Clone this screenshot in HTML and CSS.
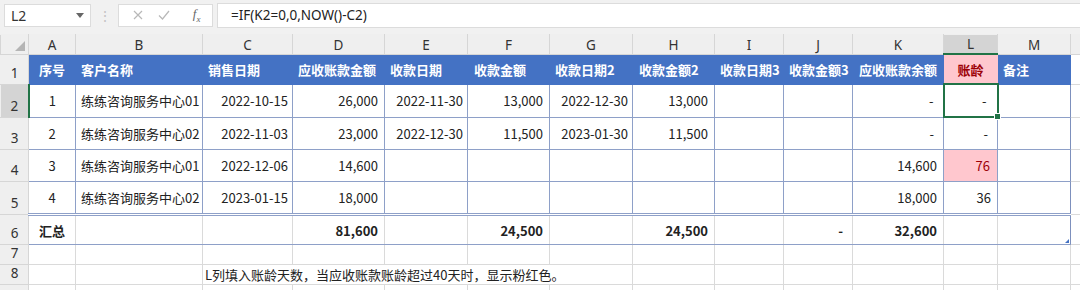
FILE: index.html
```html
<!DOCTYPE html>
<html>
<head>
  <title>账龄表</title>
  <link rel="stylesheet" href="styles.css">
</head>
<body>
  <div class="formula-bar">
    <div class="name-box">
      <span>L2</span>
      <svg class="caret" width="8" height="5" viewBox="0 0 8 5"><path d="M0 0h8L4 5z" fill="#666"/></svg>
    </div>
    <div class="grip">⋮</div>
    <div class="fx-buttons">
      <svg width="10" height="10" viewBox="0 0 10 10"><path d="M1 1l8 8M9 1l-8 8" stroke="#b8b8b8" stroke-width="1.2"/></svg>
      <svg width="12" height="10" viewBox="0 0 12 10"><path d="M1 5.5l3.5 3.5L11 1" stroke="#b8b8b8" stroke-width="1.2" fill="none"/></svg>
      <span class="fx">f<sub>x</sub></span>
    </div>
    <div class="formula-input">=IF(K2=0,0,NOW()-C2)</div>
  </div>

  <table class="sheet">
    <colgroup>
      <col style="width:28px"><col style="width:47px"><col style="width:127px"><col style="width:90px">
      <col style="width:92px"><col style="width:83px"><col style="width:82px"><col style="width:83px">
      <col style="width:82px"><col style="width:69px"><col style="width:69px"><col style="width:91px">
      <col style="width:54px"><col style="width:73px"><col style="width:80px">
    </colgroup>
    <tr class="col-heads">
      <th class="corner"><span class="corner-mark"></span></th>
      <th>A</th><th>B</th><th>C</th><th>D</th><th>E</th><th>F</th><th>G</th>
      <th>H</th><th>I</th><th>J</th><th>K</th><th class="sel-col">L</th><th>M</th><th></th>
    </tr>
    <tr class="r-head">
      <th class="row-num">1</th>
      <td class="c">序号</td><td>客户名称</td><td>销售日期</td><td>应收账款金额</td><td>收款日期</td>
      <td class="p6">收款金额</td><td>收款日期2</td><td class="p6">收款金额2</td><td>收款日期3</td><td>收款金额3</td>
      <td class="p6">应收账款余额</td><td class="c warn">账龄</td><td>备注</td><td class="plain"></td>
    </tr>
    <tr class="r-data">
      <th class="row-num sel-row">2</th>
      <td class="c">1</td><td>练练咨询服务中心01</td><td class="r">2022-10-15</td><td class="n">26,000</td>
      <td class="r">2022-11-30</td><td class="n">13,000</td><td class="r">2022-12-30</td><td class="n">13,000</td>
      <td></td><td></td><td class="n">-&nbsp;</td><td class="n sel-cell">-&nbsp;<span class="handle"></span></td><td class="last"></td><td class="plain"></td>
    </tr>
    <tr class="r-data">
      <th class="row-num">3</th>
      <td class="c">2</td><td>练练咨询服务中心02</td><td class="r">2022-11-03</td><td class="n">23,000</td>
      <td class="r">2022-12-30</td><td class="n">11,500</td><td class="r">2023-01-30</td><td class="n">11,500</td>
      <td></td><td></td><td class="n">-&nbsp;</td><td class="n">-&nbsp;</td><td class="last"></td><td class="plain"></td>
    </tr>
    <tr class="r-data">
      <th class="row-num">4</th>
      <td class="c">3</td><td>练练咨询服务中心01</td><td class="r">2022-12-06</td><td class="n">14,600</td>
      <td></td><td></td><td></td><td></td>
      <td></td><td></td><td class="n">14,600</td><td class="n warn-fill">76</td><td class="last"></td><td class="plain"></td>
    </tr>
    <tr class="r-data">
      <th class="row-num">5</th>
      <td class="c">4</td><td>练练咨询服务中心02</td><td class="r">2023-01-15</td><td class="n">18,000</td>
      <td></td><td></td><td></td><td></td>
      <td></td><td></td><td class="n">18,000</td><td class="n">36</td><td class="last"></td><td class="plain"></td>
    </tr>
    <tr class="r-total">
      <th class="row-num">6</th>
      <td class="c">汇总</td><td></td><td></td><td class="n">81,600</td>
      <td></td><td class="n">24,500</td><td></td><td class="n">24,500</td>
      <td></td><td class="n">-&nbsp;</td><td class="n">32,600</td><td></td><td class="last"><span class="resize"></span></td><td class="plain"></td>
    </tr>
    <tr class="r-empty">
      <th class="row-num">7</th>
      <td></td><td></td><td></td><td></td><td></td><td></td><td></td><td></td><td></td><td></td><td></td><td></td><td></td><td></td>
    </tr>
    <tr class="r-empty">
      <th class="row-num">8</th>
      <td></td><td></td><td colspan="5" class="note">L列填入账龄天数，当应收账款账龄超过40天时，显示粉红色。</td>
      <td></td><td></td><td></td><td></td><td></td><td></td><td></td>
    </tr>
    <tr class="r-empty r-cut">
      <th class="row-num"></th>
      <td></td><td></td><td></td><td></td><td></td><td></td><td></td><td></td><td></td><td></td><td></td><td></td><td></td><td></td>
    </tr>
  </table>
</body>
</html>
```

FILE: styles.css
```css
body {
  margin: 0;
  width: 1080px;
  height: 290px;
  overflow: hidden;
  background: #fff;
  font-family: "Noto Sans CJK SC", "Noto Sans", sans-serif;
  color: #222;
}

.formula-bar {
  display: flex;
  align-items: center;
  height: 34px;
  padding: 0 0 0 4px;
  background: #f1f1f1;
  box-sizing: border-box;
}

.name-box {
  display: flex;
  align-items: center;
  justify-content: space-between;
  width: 87px;
  height: 23px;
  padding: 0 6px 0 6px;
  box-sizing: border-box;
  background: #fff;
  border: 1px solid #dcdcdc;
  font-family: "Noto Sans", sans-serif;
  font-size: 14px;
  color: #333;
  margin-top: -4px;
}

.grip {
  width: 27px;
  text-align: center;
  color: #c4c4c4;
  font-size: 14px;
  margin-top: -4px;
}

.fx-buttons {
  display: flex;
  align-items: center;
  justify-content: space-around;
  width: 95px;
  height: 23px;
  padding: 0 4px 0 6px;
  box-sizing: border-box;
  background: #fff;
  border: 1px solid #dcdcdc;
  margin-top: -4px;
}

.fx {
  font-family: "Liberation Serif", serif;
  font-style: italic;
  font-size: 13px;
  color: #666;
  margin-left: 8px;
}

.fx sub {
  font-size: 9px;
}

.formula-input {
  flex: 1;
  height: 23px;
  margin: -4px 0 0 4px;
  padding: 0 0 0 13px;
  background: #fff;
  border: 1px solid #dcdcdc;
  border-right: none;
  font-family: "Noto Sans", sans-serif;
  font-size: 13.5px;
  line-height: 22px;
  color: #222;
}

.sheet {
  border-collapse: collapse;
  table-layout: fixed;
  width: 1150px;
  font-size: 13px;
}

.sheet td,
.sheet th {
  padding: 0 5px;
  border: 1px solid #dadada;
  white-space: nowrap;
  overflow: hidden;
  font-weight: normal;
}

.col-heads th {
  height: 18px;
  background: #efefef;
  border-color: #d6d6d6;
  border-top-color: #efefef;
  font-family: "Noto Sans", sans-serif;
  font-size: 13.5px;
  color: #333;
  text-align: center;
  vertical-align: bottom;
  padding-bottom: 0;
  line-height: 17px;
}

.col-heads th.sel-col {
  background: #d4d4d4;
  border-bottom: 2px solid #217346;
}

.corner {
  position: relative;
}

.corner-mark {
  position: absolute;
  right: 3px;
  bottom: 3px;
  border-style: solid;
  border-width: 0 0 10px 10px;
  border-color: transparent transparent #b5b5b5 transparent;
}

.row-num {
  background: #efefef;
  border-color: #d6d6d6 !important;
  border-left-color: #efefef !important;
  font-family: "Noto Sans", sans-serif;
  font-size: 13.5px;
  color: #333;
  text-align: center;
  vertical-align: bottom;
  padding: 0 0 2px 0 !important;
  line-height: 17px;
}

.row-num.sel-row {
  background: #d4d4d4;
  border-right: 2px solid #217346 !important;
}

.r-head td {
  height: 28px;
  background: #4472c4;
  border-color: #4472c4;
  color: #fff;
  font-weight: bold;
}

.r-head td.plain {
  background: #fff;
  border-color: #dadada;
}

.r-head td.warn {
  background: #ffc7ce;
  border-color: #ffc7ce;
  color: #9c0006;
}

.r-data td {
  height: 31px;
  border-color: #8ea0c8;
}

.r-total td {
  height: 28px;
  border-top: 3px double #8ea0c8;
  border-bottom: 1px solid #8ea0c8;
  font-weight: bold;
}

.sheet td.last {
  border-right: 1px solid #7d90bd;
}

.sheet td.plain {
  border-color: #dadada;
}

.r-total td.plain {
  border-top: 1px solid #dadada;
}

.r-empty td {
  height: 18px;
}

.c {
  text-align: center;
}

.r {
  text-align: right;
  padding-right: 4px !important;
}

.n {
  text-align: right;
  padding-right: 6px !important;
}

.p6 {
  padding-left: 6px !important;
}

.warn-fill {
  background: #ffc7ce;
  color: #9c0006;
  padding-right: 7px !important;
}

.sel-cell {
  position: relative;
  overflow: visible !important;
  border: 2px solid #217346 !important;
  padding-right: 7px !important;
}

.handle {
  position: absolute;
  right: -4px;
  bottom: -4px;
  width: 5px;
  height: 5px;
  background: #217346;
  border: 1px solid #fff;
}

td.last {
  position: relative;
}

.resize {
  position: absolute;
  right: 1px;
  bottom: 1px;
  border-style: solid;
  border-width: 0 0 4px 4px;
  border-color: transparent transparent #4472c4 transparent;
}

.note {
  overflow: visible !important;
  padding-left: 2px !important;
  border-left-color: #dadada;
}
```
